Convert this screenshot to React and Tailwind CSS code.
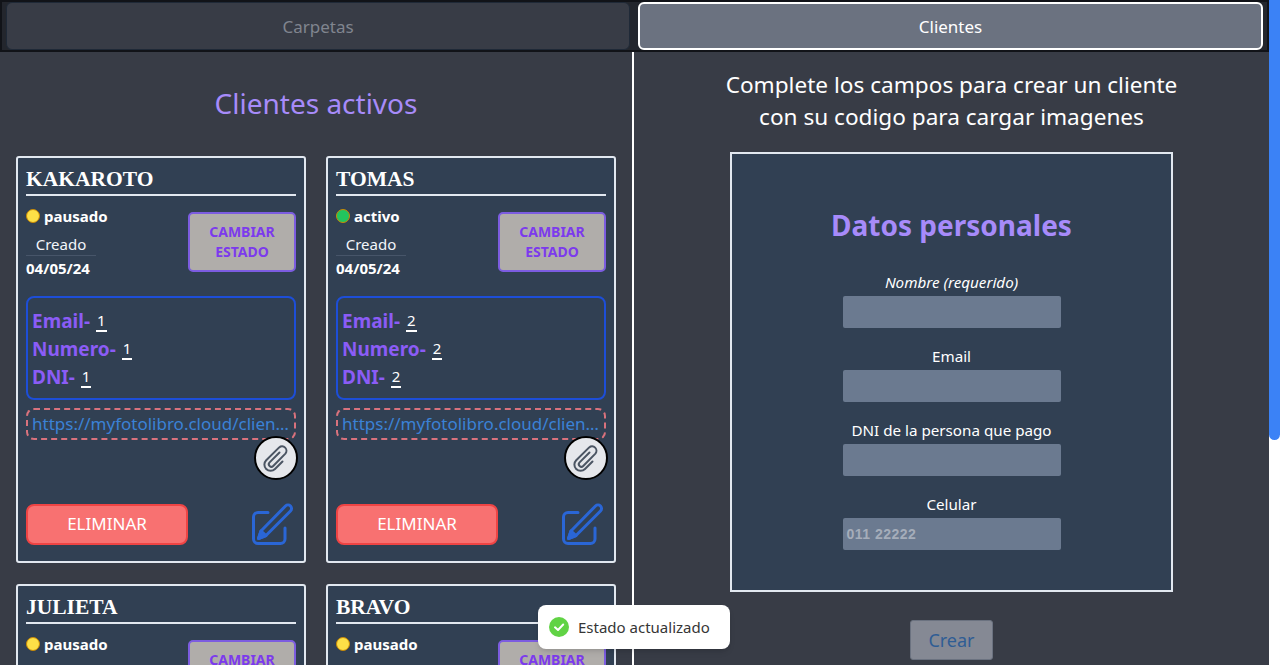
const font = { fontFamily: '"Noto Sans", sans-serif' };

function Clip() {
  return (
    <svg width="30" height="30" viewBox="0 0 30 30" fill="none" stroke="#4b5563" strokeWidth="2" strokeLinecap="round" strokeLinejoin="round">
      <path d="M18.5 9.5 L8.6 19.4 a2.5 2.5 0 0 0 3.6 3.6 L24.4 10.6 a4.4 4.4 0 0 0 -6.2 -6.2 L5.2 17.2 a6.2 6.2 0 0 0 8.8 8.8 L21.5 18.5" />
    </svg>
  );
}

function Pen() {
  return (
    <svg width="42" height="42" viewBox="0 0 42 42" fill="none" stroke="#2a66d6" strokeWidth="3" strokeLinecap="round" strokeLinejoin="round">
      <path d="M16 9.500 H6 a4.500 4.500 0 0 0 -4.500 4.500 V36 a4.500 4.500 0 0 0 4.500 4.500 H28.500 a4.500 4.500 0 0 0 4.500 -4.500 V25" />
      <path d="M33.500 3 a3.500 3.500 0 0 1 5 5 L14 32.500 L6.500 35.500 L9 28 Z" />
      <path d="M6.500 35.500 L9 28 L14 32.500 Z" fill="#2a66d6" />
    </svg>
  );
}

function Card({ name, status, dot, id, short }) {
  return (
    <div className={`w-[290px] border-2 border-[#e2e8f0] rounded-[3px] bg-[#314053] px-2 pt-[7px] shrink-0 ${short ? "h-[100px]" : "h-[407px]"}`}>
      <div className="text-[21.5px] leading-[28px] font-bold text-white border-b-2 border-[#e2e8f0] pb-[1px] whitespace-nowrap" style={{ fontFamily: '"Liberation Serif", serif' }}>{name}</div>
      <div className="flex justify-between mt-[10px]">
        <div className="w-[70px]">
          <div className="flex items-center h-[20px] w-max">
            <span className={`w-[14px] h-[14px] shrink-0 rounded-full border border-[#ca8a04] ${dot}`} />
            <span className="ml-[4px] text-[15px] font-bold text-white leading-[20px] whitespace-nowrap">{status}</span>
          </div>
          <div className="mt-[8px] text-[15px] leading-[20px] text-[#f1f5f9] text-center border-b border-[#475569] pb-[1px]">Creado</div>
          <div className="text-[15px] font-bold text-white leading-[24px]">04/05/24</div>
        </div>
        <div className="w-[108px] h-[60px] mt-[6px] border-2 border-[#7c5ce0] rounded-[5px] bg-[#b0adaa] flex flex-col items-center justify-center text-[14px] font-bold leading-[20px] text-[#7c3aed] shrink-0">
          <span>CAMBIAR</span>
          <span>ESTADO</span>
        </div>
      </div>
      {!short && (
        <>
          <div className="mt-[16px] h-[104px] border-2 border-[#1d4ed8] rounded-[8px] px-[4px] pt-[2px] flex flex-col justify-center">
            {[["Email", id], ["Numero", id], ["DNI", id]].map(([k, v]) => (
              <div key={k} className="h-[28px] flex items-center text-[19px] font-bold text-[#8b5cf6] leading-[28px]">
                {k}-
                <span className="ml-[6px] text-[15px] font-normal text-white border-b-2 border-white px-[1px] leading-[20px]">{v}</span>
              </div>
            ))}
          </div>
          <div className="mt-[8px] h-[32px] border-2 border-dashed border-[#d9727d] rounded-[8px] px-[4px] text-[#3b82d6] text-[17px] leading-[27px] truncate">
            https://myfotolibro.cloud/clientes/imagenes
          </div>
          <div className="flex justify-end -mr-[2px] -mt-[4px]">
            <div className="w-[44px] h-[44px] rounded-full border-2 border-black bg-[#e5e7eb] flex items-center justify-center">
              <Clip />
            </div>
          </div>
          <div className="flex justify-between items-center mt-[23px]">
            <div className="w-[162px] h-[41px] rounded-[8px] border-2 border-[#ef4444] bg-[#f87171] text-white text-[17px] flex items-center justify-center">ELIMINAR</div>
            <div className="mr-[2px]"><Pen /></div>
          </div>
        </>
      )}
    </div>
  );
}

function Field({ label, italic, placeholder, className }) {
  return (
    <div className={`flex flex-col items-center ${className || ""}`}>
      <div className={`text-[15.2px] leading-[20px] pb-[4px] text-white ${italic ? "italic" : ""}`}>{label}</div>
      <div className="w-[218px] h-[32px] rounded-[2px] bg-[#6b7a90] px-[4px] flex items-center text-[14px] font-bold tracking-[0.5px] text-[#a5adba]" style={{ fontFamily: '"Liberation Sans", sans-serif' }}>{placeholder}</div>
    </div>
  );
}

export default function App() {
  return (
    <div className="relative h-[665px] w-[1280px] overflow-hidden flex bg-white" style={font}>
      <div className="w-[1269px] flex flex-col bg-[#383c46] shrink-0">
        <div className="h-[52px] flex gap-[8px] border-2 border-[#111318] border-t-2 bg-[#23262d] pl-[4px] pr-[4px] pt-0 shrink-0">
          <div className="w-[624px] h-[48px] pt-[2px] rounded-[6px] border border-[#1f2937] bg-[#383c46] text-[#80858f] text-[17px] flex items-center justify-center">Carpetas</div>
          <div className="w-[625px] h-[48px] pt-[2px] rounded-[6px] border-2 border-white bg-[#6b7280] text-white text-[17px] flex items-center justify-center">Clientes</div>
        </div>
        <div className="flex flex-1 min-h-0">
          <div className="w-[632px] shrink-0 pl-[16px] overflow-hidden">
            <div className="w-[600px] text-center text-[28px] leading-[40px] text-[#a78bfa] mt-[31px]">Clientes activos</div>
            <div className="grid grid-cols-[290px_290px] gap-x-[20px] gap-y-[21px] mt-[33px]">
              <Card name="KAKAROTO" status="pausado" dot="bg-[#fde047]" id="1" />
              <Card name="TOMAS" status="activo" dot="bg-[#22c55e] border-[#15803d]" id="2" />
              <Card name="JULIETA" status="pausado" dot="bg-[#fde047]" short />
              <Card name="BRAVO" status="pausado" dot="bg-[#fde047]" short />
            </div>
          </div>
          <div className="w-[2px] bg-white shrink-0" />
          <div className="flex-1 flex flex-col items-center">
            <div className="text-[22.6px] leading-[32px] text-white text-center mt-[17px]">
              Complete los campos para crear un cliente
              <br />
              con su codigo para cargar imagenes
            </div>
            <div className="w-[443px] h-[440px] border-2 border-[#e2e8f0] bg-[#314053] mt-[19px] flex flex-col items-center shrink-0">
              <div className="text-[28px] font-bold leading-[40px] text-[#a78bfa] mt-[51px]">Datos personales</div>
              <Field label="Nombre (requerido)" italic className="mt-[27px]" />
              <Field label="Email" className="mt-[18px]" />
              <Field label="DNI de la persona que pago" className="mt-[18px]" />
              <Field label="Celular" placeholder="011 22222" className="mt-[18px]" />
            </div>
            <div className="mt-[28px] w-[83px] h-[40px] rounded-[3px] border border-[#6b7280] bg-[#858994] text-[#2f5d94] text-[18px] flex items-center justify-center shrink-0">Crear</div>
          </div>
        </div>
      </div>
      <div className="w-[11px] bg-white shrink-0">
        <div className="w-[11px] h-[440px] bg-[#3b82f6] rounded-b-[6px]" />
      </div>
      <div className="absolute left-[538px] top-[605px] w-[192px] h-[44px] bg-white rounded-[8px] shadow-md flex items-center pl-[11px] text-[15px] text-[#363636]">
        <svg width="20" height="20" viewBox="0 0 20 20" className="shrink-0">
          <circle cx="10" cy="10" r="10" fill="#61d345" />
          <path d="M6 10.3 L9 13 L14.2 7.5" fill="none" stroke="#fff" strokeWidth="2" strokeLinecap="round" strokeLinejoin="round" />
        </svg>
        <span className="ml-[9px]">Estado actualizado</span>
      </div>
    </div>
  );
}
